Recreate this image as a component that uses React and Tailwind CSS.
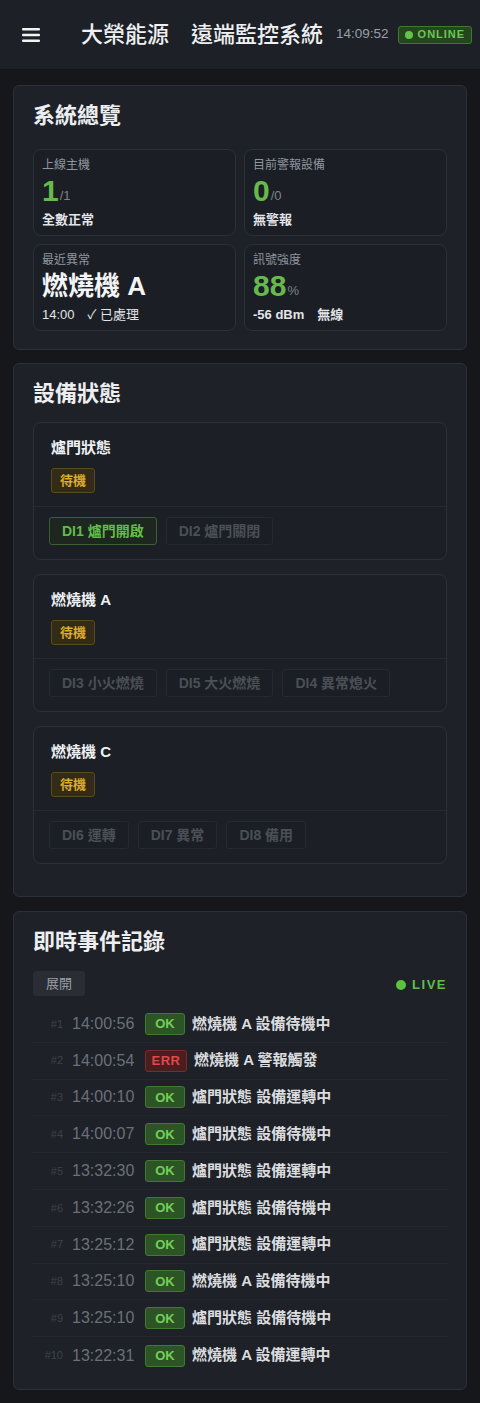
import React from 'react';

const FONT = { fontFamily: '"Liberation Sans", "Noto Sans CJK TC", sans-serif' };

const overview = [
    { label: '上線主機', big: '1', unit: '/1', green: true, sub: '全數正常' },
    { label: '目前警報設備', big: '0', unit: '/0', green: true, sub: '無警報' },
    { label: '最近異常', big: '燃燒機 A', unit: '', green: false, sub: '14:00　✓ 已處理' },
    { label: '訊號強度', big: '88', unit: '%', green: true, sub: '-56 dBm　無線' },
];

const devices = [
    { name: '爐門狀態', chips: [{ t: 'DI1 爐門開啟', on: true }, { t: 'DI2 爐門關閉' }] },
    { name: '燃燒機 A', chips: [{ t: 'DI3 小火燃燒' }, { t: 'DI5 大火燃燒' }, { t: 'DI4 異常熄火' }] },
    { name: '燃燒機 C', chips: [{ t: 'DI6 運轉' }, { t: 'DI7 異常' }, { t: 'DI8 備用' }] },
];

const events = [
    ['14:00:56', 'OK', '燃燒機 A 設備待機中'],
    ['14:00:54', 'ERR', '燃燒機 A 警報觸發'],
    ['14:00:10', 'OK', '爐門狀態 設備運轉中'],
    ['14:00:07', 'OK', '爐門狀態 設備待機中'],
    ['13:32:30', 'OK', '爐門狀態 設備運轉中'],
    ['13:32:26', 'OK', '爐門狀態 設備待機中'],
    ['13:25:12', 'OK', '爐門狀態 設備運轉中'],
    ['13:25:10', 'OK', '燃燒機 A 設備待機中'],
    ['13:25:10', 'OK', '爐門狀態 設備待機中'],
    ['13:22:31', 'OK', '燃燒機 A 設備運轉中'],
];

function Card({ title, titleGap, className = '', children }) {
    return (
        <section className={`rounded-md border border-[#2c3038] bg-[#1e2128] px-[19px] pt-[19px] ${className}`}>
            <h2 className={`text-[22px] leading-[22px] font-bold text-[#eceef0] ${titleGap}`}>{title}</h2>
            {children}
        </section>
    );
}

export default function App() {
    return (
        <div className="min-h-[1403px] bg-[#15171b] text-white pb-[15px]" style={FONT}>
            {/* Header */}
            <header className="h-[70px] bg-[#1d2026] border-b border-[#121317] flex items-center">
                <svg className="ml-[22px] shrink-0" width="18" height="14" viewBox="0 0 18 14">
                    <rect x="0" y="0" width="18" height="2.4" rx="1" fill="#f1f2f4" />
                    <rect x="0" y="5.8" width="18" height="2.4" rx="1" fill="#f1f2f4" />
                    <rect x="0" y="11.6" width="18" height="2.4" rx="1" fill="#f1f2f4" />
                </svg>
                <h1 className="ml-[41px] text-[22px] font-medium text-[#eef0f2] whitespace-nowrap">大榮能源　遠端監控系統</h1>
                <span className="ml-[13px] text-[13.5px] text-[#9aa0a8] tabular-nums">14:09:52</span>
                <span className="ml-[9px] flex items-center gap-[5px] h-[18px] px-[6px] rounded-[3px] border border-[#3f7a30] bg-[#24461f] text-[#6fc456] text-[11px] font-bold tracking-[1px]">
                    <span className="w-[8px] h-[8px] rounded-full bg-[#64c24a]" />
                    ONLINE
                </span>
            </header>

            <main className="px-[13px] pt-[15px] flex flex-col">
                {/* 系統總覽 */}
                <Card title="系統總覽" titleGap="mb-[22px]" className="pb-[18px]">
                    <div className="grid grid-cols-2 gap-2">
                        {overview.map((c) => (
                            <div key={c.label} className="h-[87px] rounded-lg border border-[#2c3038] bg-[#1b1e24] px-2 pt-[7px]">
                                <div className="text-[12px] leading-[16px] text-[#9096a0]">{c.label}</div>
                                <div className="h-[34px] flex items-end">
                                    <span className={`font-bold leading-[32px] ${c.green ? 'text-[30px] text-[#66b94a]' : 'text-[26px] text-[#f3f4f6]'}`}>{c.big}</span>
                                    {c.unit && <span className="text-[13px] leading-[22px] text-[#7d838c] ml-[1px]">{c.unit}</span>}
                                </div>
                                <div className={`mt-[3px] text-[13px] leading-[20px] text-[#e3e5e8] ${c.green ? 'font-bold' : ''}`}>{c.sub}</div>
                            </div>
                        ))}
                    </div>
                </Card>

                {/* 設備狀態 */}
                <Card title="設備狀態" titleGap="mb-[17px]" className="mt-[13px] pb-[18px]">
                    {devices.map((d) => (
                        <div key={d.name} className="mb-[14px] rounded-lg border border-[#2c3038] bg-[#1c1f26]">
                            <div className="px-[17px] pt-[16px] pb-[13px] border-b border-[#262930]">
                                <div className="text-[15px] leading-[18px] font-bold text-[#eef0f2]">{d.name}</div>
                                <span className="mt-[11px] inline-flex items-center h-[25px] px-[8px] rounded-[3px] border border-[#5a4a1c] bg-[#332b15] text-[13px] font-bold text-[#dcaa2e]">待機</span>
                            </div>
                            <div className="px-[15px] pt-[10px] pb-[14px] flex gap-[9px]">
                                {d.chips.map((c) => (
                                    <span
                                        key={c.t}
                                        className={`inline-flex items-center h-[28px] px-3 rounded-[3px] border text-[14px] font-bold ${c.on ? 'border-[#3b5f30] bg-[#1e2620] text-[#5fbd48]' : 'border-[#262930] bg-[#1b1e24] text-[#4a4f57]'}`}
                                    >
                                        {c.t}
                                    </span>
                                ))}
                            </div>
                        </div>
                    ))}
                </Card>

                {/* 即時事件記錄 */}
                <Card title="即時事件記錄" titleGap="mb-[18px]" className="mt-[14px] pb-[15px]">
                    <div className="flex items-center justify-between">
                        <button className="h-[25px] px-[13px] rounded-[3px] bg-[#2a2d34] text-[13px] text-[#9aa0a8]">展開</button>
                        <span className="mt-[2px] flex items-center gap-[6px] text-[13px] font-bold tracking-[1.5px] text-[#5fbf45]">
                            <span className="w-[10px] h-[10px] rounded-full bg-[#5cc242]" />
                            LIVE
                        </span>
                    </div>
                    <div className="mt-[10px]">
                        {events.map(([time, st, text], i) => (
                            <div key={i} className={`h-[36.8px] flex items-center ${i < events.length - 1 ? 'border-b border-[#25282f]' : ''}`}>
                                <span className="w-[30px] text-right text-[11px] text-[#3d4149]">#{i + 1}</span>
                                <span className="ml-[9px] w-[64px] text-[16px] text-[#6b7078]">{time}</span>
                                <span
                                    className={`ml-[9px] inline-flex items-center justify-center h-[22px] rounded-[3px] border text-[13px] font-bold ${st === 'OK' ? 'w-[40px] border-[#3f7a33] bg-[#2c5424] text-[#72cf58]' : 'w-[42px] border-[#7c2b2b] bg-[#4a1d1f] text-[#e2474a] tracking-[0.5px]'}`}
                                >
                                    {st}
                                </span>
                                <span className="ml-[7px] text-[15px] font-bold text-[#dadcdf]">{text}</span>
                            </div>
                        ))}
                    </div>
                </Card>
            </main>
        </div>
    );
}
